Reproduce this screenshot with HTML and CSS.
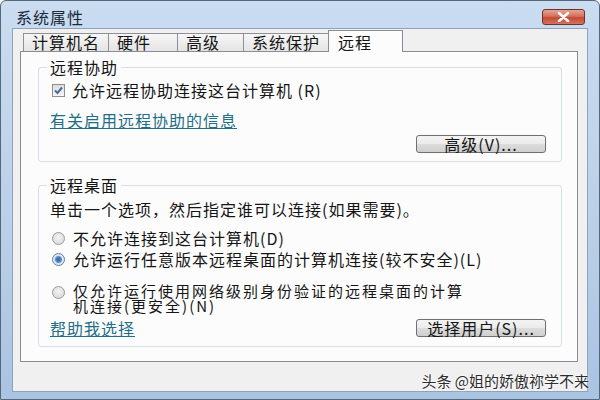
FILE: index.html
```html
<!DOCTYPE html>
<html>
<head>
    <meta charset="utf-8">
    <title>系统属性</title>
    <link rel="stylesheet" href="styles.css">
</head>
<body>

    <div class="window">
        <div class="titlebar">
            <span class="title">系统属性</span>
            <span class="close">
                <svg width="13" height="10" viewBox="0 0 13 10">
                    <path d="M2 1 L11 9 M11 1 L2 9" stroke="#fff" stroke-width="2.6" stroke-linecap="round"/>
                </svg>
            </span>
        </div>

        <div class="body">
            <div class="tabs">
                <div class="tab">计算机名</div>
                <div class="tab">硬件</div>
                <div class="tab">高级</div>
                <div class="tab">系统保护</div>
                <div class="tab selected">远程</div>
            </div>

            <div class="panel">
                <fieldset class="group assist">
                    <legend>远程协助</legend>
                    <label class="row check-row">
                        <span class="checkbox">
                            <svg width="13" height="13" viewBox="0 0 13 13">
                                <path d="M3 6.5 L5.5 9 L10 3.5" fill="none" stroke="#4a6a9c" stroke-width="2"/>
                            </svg>
                        </span>允许远程协助连接这台计算机 (R)
                    </label>
                    <div class="row link-row"><a class="link" href="#">有关启用远程协助的信息</a></div>
                    <div class="btn-row"><button class="btn">高级(V)...</button></div>
                </fieldset>

                <fieldset class="group desktop">
                    <legend>远程桌面</legend>
                    <div class="row desc">单击一个选项，然后指定谁可以连接(如果需要)。</div>
                    <label class="radio-row first"><span class="radio"></span>不允许连接到这台计算机(D)</label>
                    <label class="radio-row"><span class="radio on"></span>允许运行任意版本远程桌面的计算机连接(较不安全)(L)</label>
                    <label class="radio-row multi"><span class="radio"></span><span class="multi-text">仅允许运行使用网络级别身份验证的远程桌面的计算<br>机连接(更安全)(N)</span></label>
                    <div class="foot-row">
                        <a class="link" href="#">帮助我选择</a>
                        <button class="btn">选择用户(S)...</button>
                    </div>
                </fieldset>
            </div>

            <div class="footer">
                <span class="watermark">头条 @姐的娇傲祢学不来</span>
            </div>
        </div>
    </div>

</body>
</html>
```

FILE: styles.css
```css
body {
    margin: 0;
    width: 600px;
    height: 400px;
    overflow: hidden;
    font-family: "Noto Sans CJK SC", "Liberation Sans", sans-serif;
    color: #151515;
}

.window {
    box-sizing: border-box;
    width: 600px;
    height: 400px;
    display: flex;
    flex-direction: column;
    padding: 0 11px 7px 11px;
    background: linear-gradient(to bottom, #cadcf0, #b9cfe8 60%, #a9c3e2);
    border: 1px solid #56677a;
    border-radius: 6px 6px 0 0;
}

.titlebar {
    height: 27px;
    display: flex;
    align-items: flex-start;
    justify-content: space-between;
}

.title {
    margin: 8px 0 0 4px;
    font-size: 16px;
    line-height: 16px;
    letter-spacing: 1px;
    color: #1b2a3a;
}

.close {
    box-sizing: border-box;
    width: 43px;
    height: 16px;
    margin: 8px 3px 0 0;
    display: flex;
    align-items: center;
    justify-content: center;
    background: linear-gradient(to bottom, #e6a493, #d4705c 45%, #c24a34 55%, #d6735c);
    border: 1px solid #6e3328;
    border-radius: 3px;
}

.body {
    flex: 1;
    display: flex;
    flex-direction: column;
    background: #f0f0f0;
    border: 1px solid #8ea2b9;
}

/* tab strip */
.tabs {
    display: flex;
    align-items: flex-start;
    height: 22px;
    padding: 1px 0 0 10px;
    position: relative;
    z-index: 1;
    margin-bottom: -1px;
}

.tab {
    box-sizing: border-box;
    height: 18px;
    margin-top: 3px;
    margin-left: -1px;
    padding-left: 8px;
    font-size: 16px;
    line-height: 17px;
    letter-spacing: 1px;
    background: linear-gradient(to bottom, #f7f7f7, #e4e4e4);
    border: 1px solid #8e9095;
    border-bottom: none;
}

.tab:nth-child(1) { width: 86px; margin-left: 0; }
.tab:nth-child(2) { width: 70px; }
.tab:nth-child(3) { width: 67px; }
.tab:nth-child(4) { width: 86px; }

.tab.selected {
    width: 75px;
    height: 22px;
    margin-top: 0;
    padding-top: 3px;
    padding-left: 9px;
    background: #fcfcfc;
    border-color: #898c95;
}

.panel {
    box-sizing: border-box;
    height: 311px;
    margin: 0 9px 0 7px;
    padding: 7px 15px 0 17px;
    background: #fcfcfc;
    border: 1px solid #898c95;
}

/* group boxes */
.group {
    margin: 0;
    padding: 0 15px 9px 11px;
    border: 1px solid #d5dfe5;
    border-radius: 3px;
    min-width: 0;
}

.group legend {
    padding: 0 3px;
    margin-left: -3px;
    font-size: 16px;
    line-height: 16px;
    letter-spacing: 1px;
}

.group.assist {
    padding-bottom: 8px;
}

.group.desktop {
    margin-top: 15px;
}

.row {
    display: flex;
    align-items: center;
    height: 22px;
    font-size: 16px;
    letter-spacing: 1px;
}

.check-row {
    margin-top: 4px;
}

.link-row {
    margin-top: 8px;
}

.desc {
    margin-top: 5px;
}

.checkbox {
    box-sizing: border-box;
    width: 13px;
    height: 13px;
    margin: 0 7px 0 2px;
    background: linear-gradient(to bottom, #dcdcdc, #f6f6f6);
    border: 1px solid #8f8f8f;
    display: flex;
}

.checkbox svg {
    margin: -1px;
}

.link {
    font-size: 16px;
    letter-spacing: 1px;
    color: #1f6f86;
    text-decoration: underline;
}

.btn-row {
    display: flex;
    justify-content: flex-end;
    margin-top: 4px;
}

.btn {
    box-sizing: border-box;
    width: 130px;
    height: 18px;
    padding: 0;
    font-family: inherit;
    font-size: 16px;
    line-height: 14px;
    letter-spacing: 1px;
    color: #151515;
    background: linear-gradient(to bottom, #f4f4f4, #ebebeb 50%, #dcdcdc 51%, #cfcfcf);
    border: 1px solid #707070;
    border-radius: 3px;
}

/* radio options */
.radio-row {
    display: flex;
    align-items: center;
    height: 20px;
    margin-top: 1px;
    font-size: 16px;
    letter-spacing: 1px;
}

.radio-row.first {
    margin-top: 8px;
}

.radio-row.multi {
    height: 30px;
    margin-top: 14px;
    align-items: flex-start;
}

.multi-text {
    font-size: 15px;
    line-height: 15px;
    letter-spacing: 2px;
}

.radio {
    box-sizing: border-box;
    flex: none;
    width: 13px;
    height: 13px;
    margin: 0 8px 0 2px;
    border-radius: 50%;
    border: 1px solid #9a9a9a;
    background: radial-gradient(circle at 50% 40%, #f4f4f4, #d4d4d4);
}

.radio-row.multi .radio {
    margin-top: 3px;
}

.radio.on {
    border-color: #5e7ea6;
    background: radial-gradient(circle, #2f5f99 0, #5c8fc8 3px, #d6e2ef 4px, #eef2f7 6px);
}

.foot-row {
    display: flex;
    align-items: center;
    justify-content: space-between;
    height: 18px;
    margin-top: 6px;
}

.footer {
    flex: 1;
    display: flex;
    align-items: flex-end;
    justify-content: flex-end;
}

.watermark {
    font-size: 15px;
    line-height: 20px;
    color: #2d2d2d;
    text-shadow: 0 0 2px #fff, 0 0 3px #fff;
    margin-right: -2px;
}
```
